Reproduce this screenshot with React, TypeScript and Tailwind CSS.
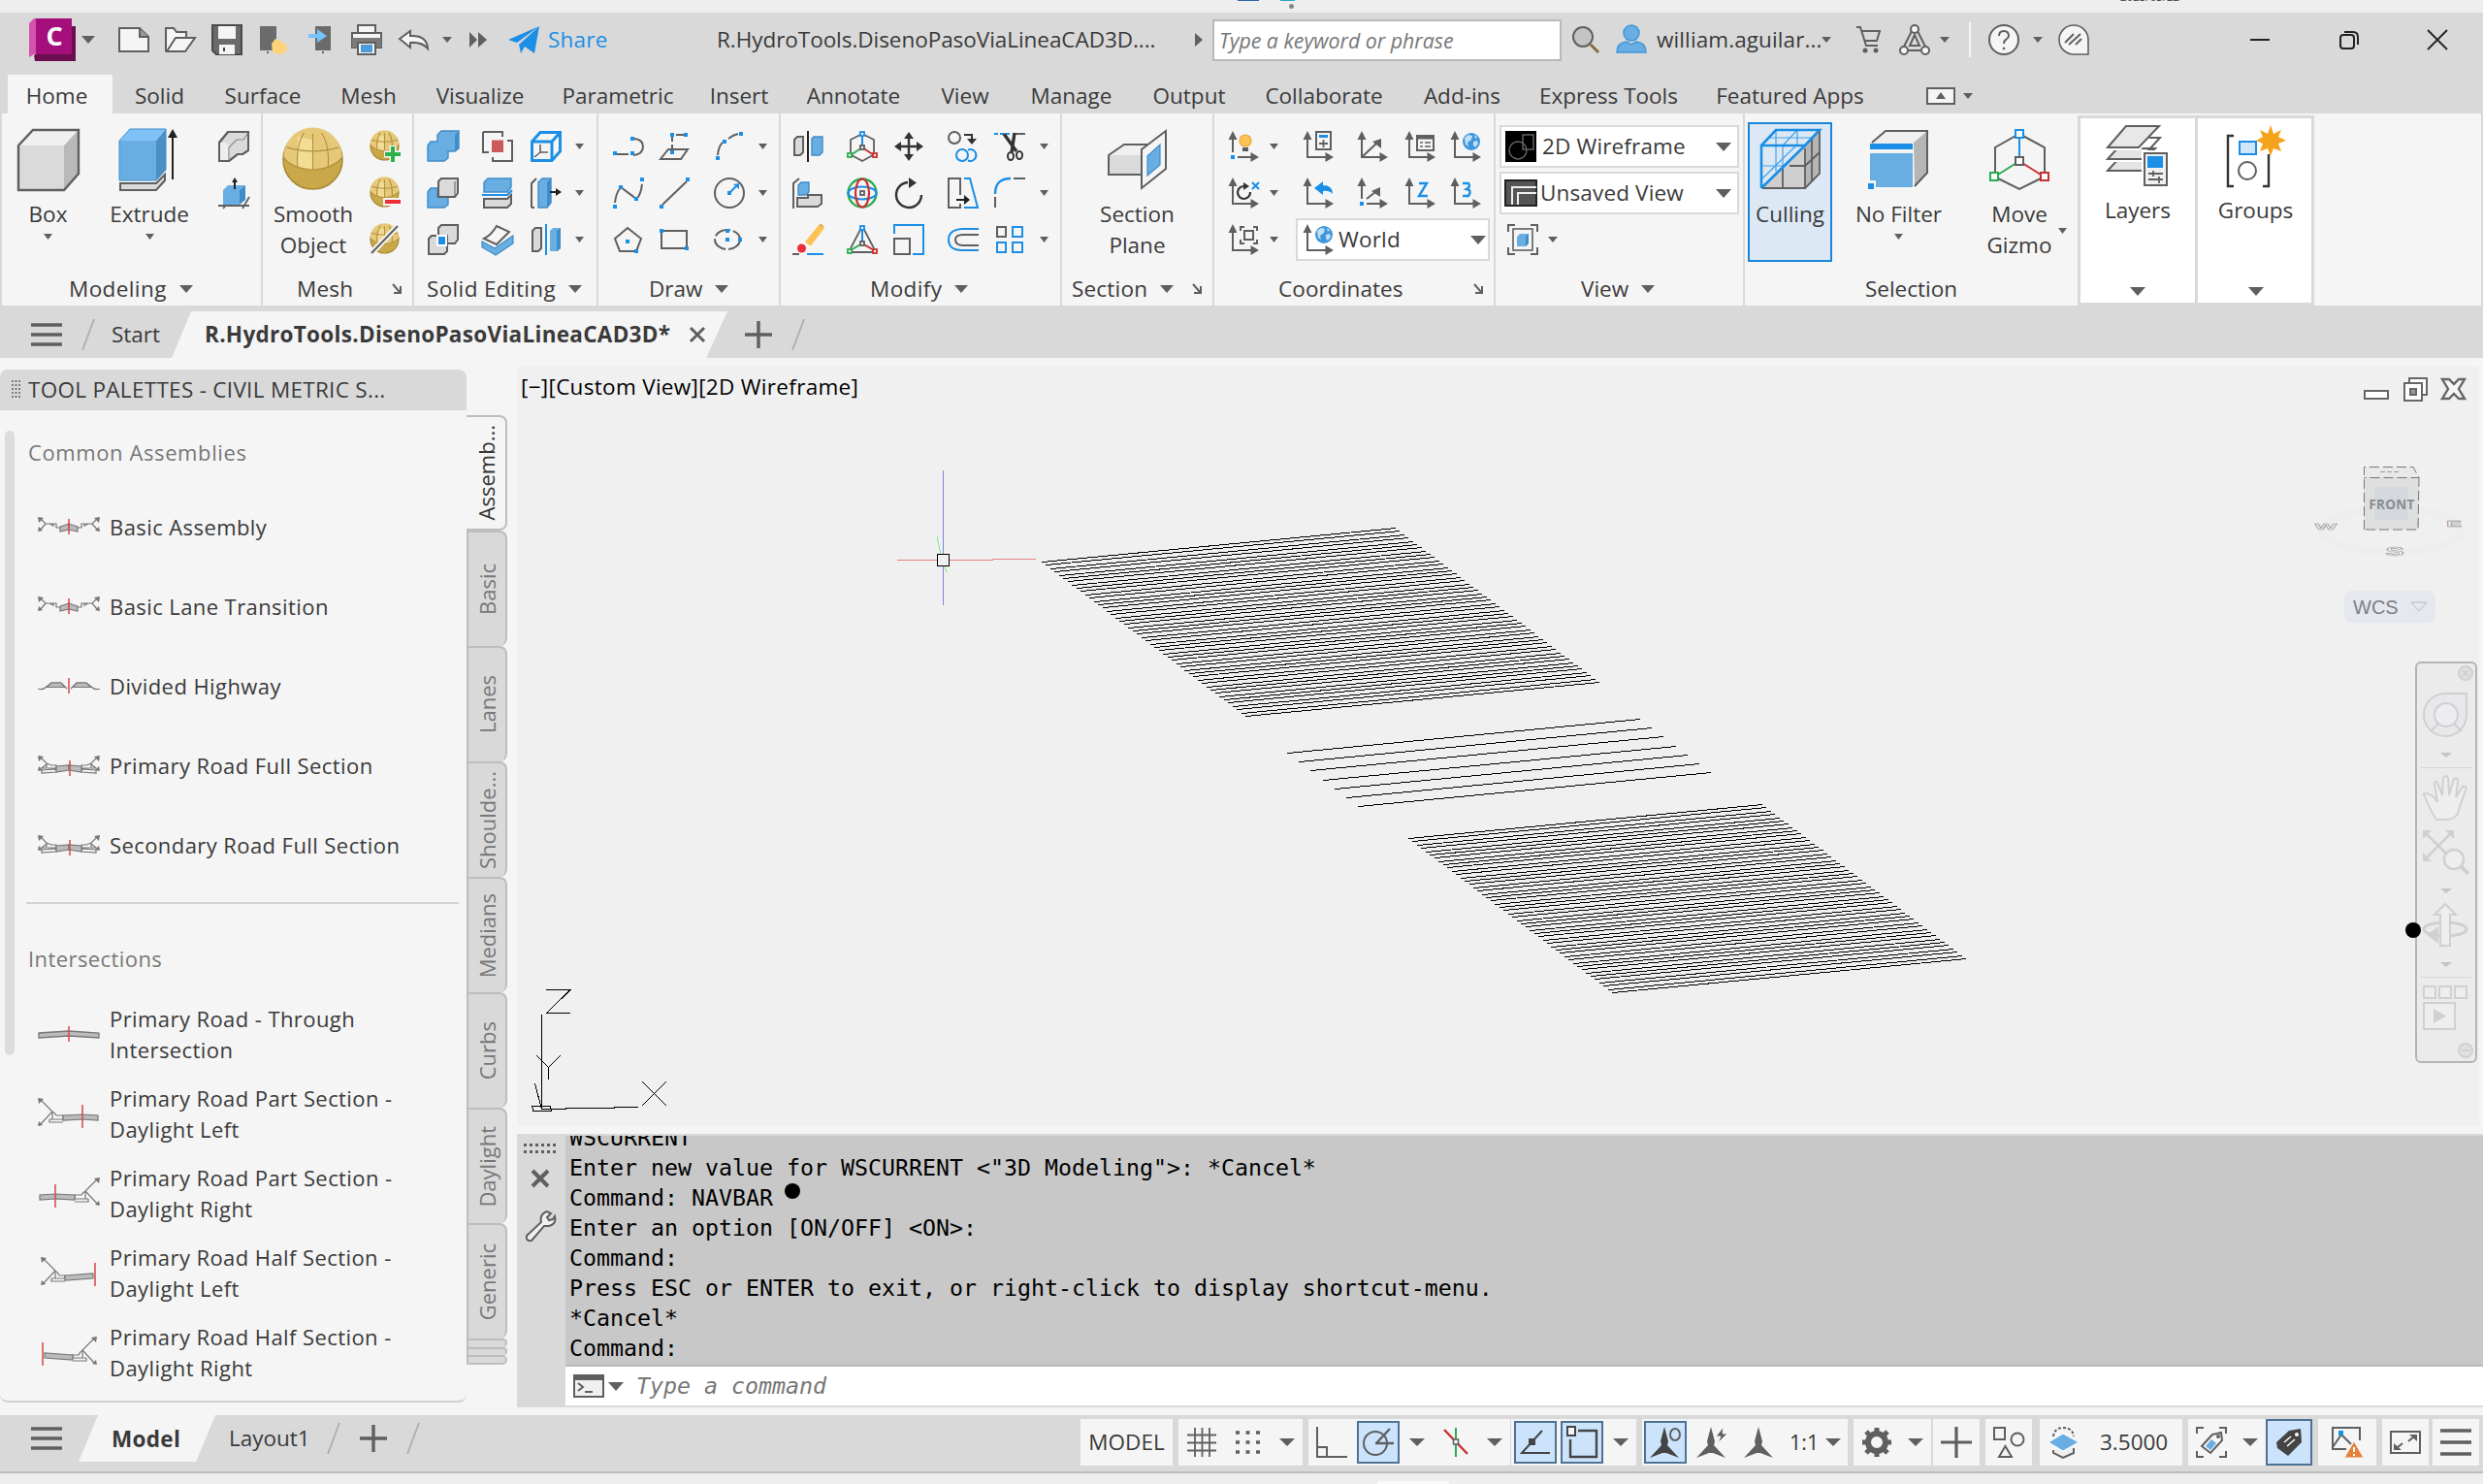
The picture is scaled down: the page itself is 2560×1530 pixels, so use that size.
import React from "react";

const K = "#5f5f5f";
const B = "#1b8ee6";
const F = "#68aee2";

type IP = { w?: number; h?: number; c?: string; children?: React.ReactNode };
const I = ({ w = 32, h = 32, c = "", children }: IP) => (
  <svg width={w} height={h} viewBox={`0 0 ${w} ${h}`} fill="none" stroke={K} strokeWidth={2} className={`block shrink-0 overflow-visible ${c}`}>
    {children}
  </svg>
);

const Down = ({ w = 14, h = 8, c = "" }: IP) => (
  <svg width={w} height={h} viewBox="0 0 14 8" preserveAspectRatio="none" fill={K} className={`block shrink-0 ${c}`}>
    <path d="M0 0H14L7 8Z" />
  </svg>
);

const Launcher = ({ c = "" }: { c?: string }) => (
  <I w={10} h={11} c={c}>
    <path d="M1 1L8 9M9 3V10H2" strokeWidth={2} />
  </I>
);

const Sq = ({ x, y }: { x: number; y: number }) => <rect x={x - 2} y={y - 2} width={4} height={4} fill={B} stroke="none" />;

/* ---------- modeling ---------- */
const BoxBig = () => (
  <I w={64} h={64}>
    <path d="M1 17L16 1H63L48 17Z" fill="#f0f0f0" stroke="none" />
    <path d="M48 17L63 1V46L48 62Z" fill="#b9b9b9" stroke="none" />
    <path d="M1 17H48V63H1Z" fill="#dadada" stroke="none" />
    <path d="M1 17L16 1H63V46L48 63H1Z" strokeWidth={2.4} />
  </I>
);
const ExtrudeBig = () => (
  <I w={62} h={64}>
    <path d="M0 12L11 0H48L38 12Z" fill="#7fc2f7" stroke="none" />
    <path d="M0 12H38V53H0Z" fill={F} stroke="none" />
    <path d="M38 12L48 0V42L38 53Z" fill="#4a8fc6" stroke="none" />
    <path d="M0 12L11 0H48V42L38 53H0Z" stroke="#3f8cc9" strokeWidth={1} />
    <path d="M1 56H38L47 47V53L38 63H1Z" fill="#dadada" />
    <path d="M55 52V6" stroke="#222" />
    <path d="M55 0L60 9H50Z" fill="#222" stroke="none" />
  </I>
);
const Polysolid = () => (
  <I>
    <path d="M1 12L10 1H31V20L25 24H20L11 31H1Z" fill="#dadada" />
    <path d="M1 12H8L12 16V30L11 31H1Z" fill="#eee" stroke="none" />
    <path d="M11 31V17L19 9H26L31 2" strokeWidth={1.2} stroke="#8a8a8a" />
    <path d="M1 12L10 1H31V20L25 24H20L11 31H1Z" />
  </I>
);
const PressPull = () => (
  <I>
    <path d="M0 29H32M5 32L10 26M25 32L32 20" strokeWidth={1.8} />
    <path d="M5 13L10 8H28L22 13V28H5Z" fill={F} stroke="none" />
    <path d="M22 13L28 8V23L22 28Z" fill="#3f8cc9" stroke="none" />
    <path d="M17 12V3" stroke="#222" />
    <path d="M17 0L20 5H14Z" fill="#222" stroke="none" />
  </I>
);

/* ---------- mesh ---------- */
const Ball = ({ r }: { r: number }) => (
  <g>
    <circle cx={r} cy={r} r={r - 1} fill="#c9a84a" stroke="#a88a32" strokeWidth={r > 20 ? 1.6 : 1.2} />
    <path d={`M${r * 0.05} ${r * 0.9}A${r * 0.95} ${r * 0.95} 0 0 1 ${r * 1.95} ${r * 0.9}Q${r * 1.7} ${r * 1.3} ${r} ${r * 1.35}Q${r * 0.3} ${r * 1.3} ${r * 0.05} ${r * 0.9}Z`} fill="#e6c978" stroke="none" />
    <path d={`M${r * 0.5} ${r * 0.25}L${r} ${r * 0.35}V${r * 1.3}Q${r * 0.7} ${r * 1.3} ${r * 0.5} ${r * 1.2}Z`} fill="#f3dc93" stroke="none" />
    <path
      d={`M${r} ${r * 0.15}V${r * 1.33}M${r * 0.72} ${r * 0.12}Q${r * 0.45} ${r * 0.5} ${r * 0.5} ${r * 1.24}M${r * 1.28} ${r * 0.12}Q${r * 1.55} ${r * 0.5} ${r * 1.5} ${r * 1.24}M${r * 0.15} ${r * 0.6}Q${r} ${r * 0.85} ${r * 1.85} ${r * 0.6}M${r * 0.05} ${r * 0.95}Q${r * 0.35} ${r * 1.3} ${r} ${r * 1.34}Q${r * 1.65} ${r * 1.3} ${r * 1.95} ${r * 0.95}`}
      stroke="#b09040"
      strokeWidth={1.1}
    />
  </g>
);
const BallAdd = () => (
  <I>
    <Ball r={15.5} />
    <path d="M24 15V32M15 24H32" stroke="#f5f5f5" strokeWidth={7} />
    <path d="M24 16V32M16 24H32" stroke="#2eb04b" strokeWidth={4} />
  </I>
);
const BallSub = () => (
  <I>
    <Ball r={15.5} />
    <path d="M14 25H32" stroke="#f5f5f5" strokeWidth={8} />
    <path d="M16 25H32" stroke="#ee2f35" strokeWidth={4} />
  </I>
);
const BallCrease = () => (
  <I>
    <Ball r={15.5} />
    <path d="M2 30L29 2" stroke="#f5f5f5" strokeWidth={6} />
    <path d="M2 30L29 2" stroke={K} strokeWidth={2} />
  </I>
);

/* ---------- solid editing ---------- */
const Union = () => (
  <I>
    <path d="M0 15L3 11H10V4L14 0H32V18L28 21H21V28L17 31H0Z" fill={F} stroke="#3f8cc9" strokeWidth={1.4} />
    <path d="M28 4L32 0V18L28 21Z" fill="#3f8cc9" stroke="none" />
  </I>
);
const Subtract = () => (
  <I>
    <path d="M0 15L3 11H10V20H21V28L17 31H0Z" fill={F} stroke="#3f8cc9" strokeWidth={1.4} />
    <path d="M11 4L14 1H31V16L28 20H11Z" fill="#dadada" />
    <path d="M28 4V20" strokeWidth={1} />
  </I>
);
const Intersect = () => (
  <I>
    <path d="M11 4L14 1H31V16L28 20H11Z" fill="#dadada" />
    <path d="M1 15L4 12H20V28L17 31H1Z" fill="#dadada" />
    <rect x={9} y={11} width={11} height={12} fill="#fff" stroke="none" />
    <rect x={11} y={13} width={7} height={8} fill={B} stroke="none" />
  </I>
);
const Interfere = () => (
  <I>
    <path d="M1 1H21V6M1 1V22H7" />
    <path d="M31 10H26M11 27V31H31V10H26" />
    <rect x={10} y={9.5} width={12} height={12.5} fill="#cc5a5a" stroke="none" />
  </I>
);
const Slice = () => (
  <I>
    <path d="M2 5L6 1H30V10L26 15H2Z" fill={F} stroke="#3f8cc9" strokeWidth={1.4} />
    <path d="M0 18H26L31 13" stroke={B} strokeWidth={2.2} />
    <path d="M2 22H26L30 18V27L26 31H2Z" fill="#dadada" />
  </I>
);
const Thicken = () => (
  <I>
    <path d="M0 18L13 25L32 12V20L14 32L0 24Z" fill={F} stroke="#3f8cc9" strokeWidth={1.2} />
    <path d="M2 15Q9 12 15 2L28 8Q22 14 15 21Z" fill="#f5f5f5" />
  </I>
);
const ExtractEdges = () => (
  <I>
    <path d="M1.5 11L10 1.5H30.5V21L22 30.5H1.5Z" stroke={B} strokeWidth={3} />
    <path d="M1.5 11H22L30.5 1.5M22 11V30" stroke={B} strokeWidth={3} />
    <path d="M10 14V22L4 27M10 22H18" strokeWidth={1.6} />
  </I>
);
const ExtrudeFace = () => (
  <I>
    <path d="M1 31V6L6 1M1 31H4" />
    <path d="M8 5L12 1H21V26L17 31H8Z" fill={F} stroke="#3f8cc9" strokeWidth={1.4} />
    <path d="M17 5L21 1V26L17 31Z" fill="#3f8cc9" stroke="none" />
    <path d="M20 15H27" stroke="#222" />
    <path d="M32 15L26 11V19Z" fill="#222" stroke="none" />
  </I>
);
const Separate = () => (
  <I>
    <path d="M2 7L5 4H11V25L8 28H2Z" fill="#dadada" />
    <path d="M16 0V32" stroke={B} />
    <path d="M20 7L23 4H31V25L28 28H20Z" fill={F} stroke="none" />
    <path d="M27 7L31 4V25L27 28Z" fill="#3f8cc9" stroke="none" />
  </I>
);

/* ---------- draw ---------- */
const Polyline = () => (
  <I>
    <path d="M2 24H20" strokeDasharray="14 4" />
    <path d="M22 8Q31 9 31 16Q31 24 21 25" />
    <Sq x={2} y={23} /><Sq x={20} y={23} /><Sq x={20} y={8} />
  </I>
);
const Poly3d = () => (
  <I>
    <path d="M1 29L9 19H29L22 29Z" /><path d="M13 22V4H27" strokeDasharray="8 3" />
    <Sq x={13} y={22} /><Sq x={13} y={4} /><Sq x={27} y={4} />
  </I>
);
const Arc = () => (
  <I>
    <path d="M4 25Q5 15 9 12M15 8Q20 4 25 3" />
    <Sq x={4} y={28} /><Sq x={11} y={11} /><Sq x={28} y={3} />
  </I>
);
const Spline = () => (
  <I>
    <path d="M2 26Q3 16 8 10L24 22Q29 18 30 6" strokeDasharray="16 3" />
    <Sq x={2} y={30} /><Sq x={8} y={10} /><Sq x={24} y={22} /><Sq x={30} y={2} />
  </I>
);
const Line = () => (
  <I>
    <path d="M3 28L28 4" /><Sq x={2} y={30} /><Sq x={29} y={2} />
  </I>
);
const Circle = () => (
  <I c="translate-x-[-1px]">
    <circle cx={17} cy={16} r={15} /><path d="M17 16L24 9" stroke={B} />
    <path d="M27 6V12L21 7Z" fill={B} stroke="none" /><Sq x={17} y={16} />
  </I>
);
const Polygon = () => (
  <I>
    <path d="M15 4L29 15L24 28H7L2 15Z" /><Sq x={15} y={18} /><Sq x={24} y={28} />
  </I>
);
const Rect = () => (
  <I>
    <rect x={2} y={7} width={26} height={18} /><Sq x={2} y={7} /><Sq x={28} y={25} />
  </I>
);
const Ellipse = () => (
  <I>
    <ellipse cx={14} cy={16} rx={13} ry={10} strokeDasharray="17 3" /><Sq x={14} y={7} /><Sq x={14} y={16} /><Sq x={27} y={16} />
  </I>
);

/* ---------- modify ---------- */
const Mirror3d = () => (
  <I>
    <path d="M2 9L5 6H11V22L8 25H2Z" fill="#dadada" /><path d="M16 0V32" stroke="#222" />
    <path d="M20 8L22 6H31V22L28 25H20Z" fill={F} stroke="#3f8cc9" strokeWidth={1.4} />
  </I>
);
const Align3d = () => (
  <I>
    <path d="M1 32V6L7 1" />
    <path d="M6 8L9 5H17V15L14 18H6Z" fill={F} stroke="#3f8cc9" strokeWidth={1.4} />
    <path d="M5 21H16V18H30V27L26 30H5Z" fill="#dadada" />
  </I>
);
const Erase = () => (
  <I>
    <path d="M11 21L27 1L33 4L17 25Z" fill="#fbc354" stroke="none" /><path d="M27 1L33 4L30 0Z" fill="#e09a2c" stroke="none" />
    <path d="M9 18L18 24" stroke="#fff" strokeWidth={3} /><ellipse cx={9.5} cy={25} rx={4.5} ry={4.5} fill="#ee2f35" stroke="none" />
    <path d="M0 31H7" /><path d="M15 31H32" stroke={B} />
  </I>
);
const Node = ({ x, y, s }: { x: number; y: number; s: string }) => <rect x={x - 2} y={y - 2} width={4} height={4} stroke={s} fill="#f5f5f5" strokeWidth={1.8} />;
const Gizmo = () => (
  <I>
    <path d="M4 22V9L16 3L28 9V22M5 25L16 31L27 25" strokeWidth={1.8} />
    <path d="M16 3V16" stroke={B} /><path d="M16 17L4 25" stroke="#2bab52" /><path d="M16 17L28 25" stroke="#cb2e2e" />
    <Node x={16} y={3} s={B} /><Node x={16} y={17} s={K} /><Node x={3} y={25} s="#2bab52" /><Node x={29} y={25} s="#cb2e2e" />
  </I>
);
const Rotate3d = () => (
  <I>
    <circle cx={16} cy={16} r={14.5} stroke="#2bab52" strokeWidth={2.4} /><ellipse cx={16} cy={16} rx={14.5} ry={6.5} stroke={B} strokeWidth={2.2} />
    <ellipse cx={16} cy={16} rx={7} ry={14.5} stroke="#cb2e2e" strokeWidth={2.2} /><Node x={16} y={16} s={K} />
  </I>
);
const Scale3d = () => (
  <I>
    <path d="M15 4L4 25M17 4L28 25M5 29H27" strokeWidth={1.8} />
    <path d="M16 3V18" stroke={B} /><path d="M16 20L4 27" stroke="#2bab52" /><path d="M16 20L28 27" stroke="#cb2e2e" />
    <Node x={16} y={4} s={B} /><Node x={16} y={20} s={K} /><Node x={3} y={28} s="#2bab52" /><Node x={29} y={28} s="#cb2e2e" />
  </I>
);
const Move = () => (
  <I>
    <path d="M16 4V28M4 16H28" stroke="#333" strokeWidth={2.4} />
    <path d="M16 1L21 8H11ZM16 31L21 24H11ZM1 16L8 11V21ZM31 16L24 11V21Z" fill="#333" stroke="none" />
  </I>
);
const Rotate = () => (
  <I>
    <path d="M15 5A13 13 0 1 0 29 18" stroke="#333" strokeWidth={2.4} /><path d="M16 0L24 5.5L16 11Z" fill="#333" stroke="none" />
  </I>
);
const Scale = () => (
  <I>
    <path d="M1 10V1H31V31H20" stroke={B} /><rect x={1} y={15} width={16} height={16} />
  </I>
);
const Copy = () => (
  <I>
    <circle cx={7} cy={7} r={6} /><path d="M17 4H25V9" stroke="#333" /><path d="M20 8H30L25 14Z" fill="#333" stroke="none" />
    <circle cx={15} cy={25} r={6} stroke={B} /><path d="M21 19.5A6 6 0 1 1 21 30.5" stroke={B} />
  </I>
);
const Stretch = () => (
  <I>
    <path d="M13 18V1H1V31H13V27" /><path d="M17 1H23L31 31H17" stroke={B} />
    <path d="M9 23H18" stroke="#222" /><path d="M23 23L17 18V28Z" fill="#222" stroke="none" />
  </I>
);
const Offset = () => (
  <I>
    <path d="M32 5H15Q1 6 1 16Q1 27 15 27H32" stroke={B} /><path d="M32 11H16Q8 11 8 16Q8 22 16 22H32" />
  </I>
);
const Trim = () => (
  <I>
    <path d="M0 3H16" stroke={B} strokeDasharray="4 2" /><path d="M20 3H32" />
    <path d="M10 3L23 21M21 2L18 22" stroke="#333" strokeWidth={3.4} /><ellipse cx={17} cy={26} rx={3} ry={4} stroke="#333" /><ellipse cx={26} cy={25} rx={3} ry={4} stroke="#333" />
  </I>
);
const Fillet = () => (
  <I>
    <path d="M1 17Q1 1 17 1" stroke={B} strokeWidth={2.4} /><path d="M1 20V31M20 1H32" />
  </I>
);
const ArrayIcon = () => (
  <I>
    <rect x={3} y={3} width={9} height={10} /><g stroke={B}><rect x={19} y={3} width={10} height={10} /><rect x={3} y={19} width={9} height={10} /><rect x={19} y={19} width={10} height={10} /></g>
  </I>
);

/* ---------- section ---------- */
const SectionPlane = () => (
  <I w={62} h={64}>
    <path d="M1 27L17 16H42L34 27Z" fill="#f0f0f0" stroke="none" /><path d="M1 27H34V47H1Z" fill="#dadada" stroke="none" />
    <path d="M34 47H1V27L17 16H42" /><path d="M35 21L60 2V41L35 61Z" fill="#f5f5f5" />
    <path d="M41 28L54 16V37L41 48Z" fill={F} stroke="#3f8cc9" strokeWidth={1.2} />
  </I>
);

/* ---------- coordinates ---------- */
const Axes = ({ children, corner }: { children?: React.ReactNode; corner?: boolean }) => (
  <I>
    <path d={corner ? "M4 6V22M9 27H24" : "M4 6V27H24"} /><path d="M4 0L8.5 9H-.5ZM31 27L22.5 22V32Z" fill={K} stroke="none" />
    {corner && <Sq x={4} y={27} />}
    {children}
  </I>
);
const Globe = ({ x, y }: { x: number; y: number }) => (
  <g stroke="none">
    <circle cx={x} cy={y} r={9} fill="#3f96d8" />
    <path d={`M${x - 7} ${y - 4}l4-3l4 1l-1 4l-4 3l1 4l-3-2zM${x + 2} ${y}l4-1l1 3l-3 4l-2-2zM${x + 3} ${y - 7}l3 2l-2 2z`} fill="#bfe0f7" />
  </g>
);
const UcsIcons = [
  <Axes key="a"><rect x={13} y={1} width={15} height={18} fill="#f5f5f5" /><rect x={16} y={4} width={9} height={3} fill={B} stroke="none" /><path d="M16 13H25M20.5 9V17" strokeWidth={1.8} /></Axes>,
  <Axes key="b"><path d="M4 27L19 13" /><path d="M24 8V18L15 11Z" fill={K} stroke="none" /></Axes>,
  <Axes key="c"><rect x={12} y={5} width={17} height={15} fill="#f5f5f5" /><path d="M12 7H29" strokeWidth={3} /><path d="M15 12H18M20 12H26M15 16H18M20 16H26" strokeWidth={1.6} /></Axes>,
  <Axes key="d"><Globe x={21} y={11} /></Axes>,
  <Axes key="e"><path d="M11 11L20 4V8Q30 8 30 17Q26 13 20 14V18Z" fill={B} stroke="none" /></Axes>,
  <Axes key="f" corner><path d="M9 22L18 15" /><path d="M23 10V20L14 14Z" fill={K} stroke="none" /></Axes>,
  <Axes key="g"><path d="M14 6H22L14 19H23" stroke={B} strokeWidth={2.4} /></Axes>,
  <Axes key="h"><path d="M12 6H18Q21 9 16 12Q22 13 18 19H12" stroke={B} strokeWidth={2.4} /></Axes>,
];

/* ---------- selection ---------- */
const CullingIcon = () => (
  <I w={62} h={62}>
    <path d="M1 61L62 1V46L46 61Z" fill="#cfcfcf" stroke="none" /><path d="M46 17L61 1V46L46 61Z" fill="#b5b5b5" stroke="none" />
    <path d="M46 20V61H2M46 61L61 46V2M23 38V61M30 38H46L61 24M53 10V54" strokeWidth={1.8} />
    <path d="M1 61V17L16 1H61L46 17H1M1 61L46 17" stroke={B} strokeWidth={2.6} />
    <path d="M23 17L38 1V16L1 52M8 9H53M16 2V44M1 38H24M23 17V38" stroke={B} strokeWidth={1.2} opacity={0.8} />
  </I>
);
const NoFilterIcon = () => (
  <I w={64} h={64}>
    <path d="M4 15L18 2H61L46 15Z" fill="#f0f0f0" stroke="none" /><path d="M47 14L61 2V45L48 60Z" fill="#b5b5b5" stroke="none" />
    <path d="M4 14L18 2H61V45L48 59" />
    <rect x={2} y={15} width={44} height={6} fill={B} stroke="none" /><rect x={2} y={25} width={44} height={35} fill={F} stroke="none" />
    <rect x={-1} y={53} width={9} height={10} fill="#f5f5f5" stroke="none" /><rect x={0} y={56} width={6} height={6} fill={B} stroke="none" />
  </I>
);
const MoveGizmoIcon = () => (
  <I w={62} h={64}>
    <path d="M6 44V19L31 5L57 19V44M9 51L31 62L53 51" />
    <path d="M31 9V29" stroke={B} /><path d="M28 35L9 47" stroke="#2bab52" /><path d="M34 35L53 47" stroke="#cb2e2e" />
    <rect x={27} y={1} width={8} height={8} stroke={B} fill="#fff" /><rect x={27} y={29} width={8} height={8} fill="#fff" />
    <rect x={1} y={45} width={8} height={8} stroke="#2bab52" fill="#fff" /><rect x={53} y={45} width={8} height={8} stroke="#cb2e2e" fill="#fff" />
  </I>
);
const LayersIcon = () => (
  <I w={64} h={64}>
    <path d="M1 47L11 36H50L38 47Z" fill="#e4e4e4" /><path d="M1 35L11 24H50L38 35Z" fill="#e4e4e4" stroke="#fff" strokeWidth={6} /><path d="M1 35L11 24H50L38 35Z" fill="#e4e4e4" />
    <path d="M1 23L20 1H54L33 23Z" fill="#e8e8e8" stroke="#fff" strokeWidth={6} /><path d="M1 23L20 1H54L33 23Z" fill="#e8e8e8" />
    <path d="M44 13H55L44 25H50" />
    <rect x={36} y={26} width={28} height={38} fill="#fff" stroke="none" /><rect x={39} y={29} width={23} height={33} fill="#f0f0f0" />
    <rect x={42} y={32} width={16} height={12} fill={B} stroke="none" /><path d="M43 50H58M43 56H58M48 47V53M54 53V60" strokeWidth={1.8} />
  </I>
);
const GroupsIcon = () => (
  <I w={62} h={64}>
    <path d="M8 11H2V63H8M38 63H44V30" stroke="#333" strokeWidth={2.4} />
    <rect x={14} y={17} width={17} height={13} stroke={B} fill="#cfe6f8" /><circle cx={22} cy={47} r={9} />
    <path d="M46 0L49 9L57 5L54 12L62 16L54 19L57 27L49 24L46 32L43 24L35 27L38 19L31 16L38 12L35 5L43 9Z" fill="#f5a31a" stroke="none" />
  </I>
);

/* ---------- layout pieces ---------- */
const Col = ({ c, children }: { c: string; children: React.ReactNode }) => <div className={`flex flex-col gap-4 pt-[2px] ${c}`}>{children}</div>;
const Arrows = ({ c }: { c: string }) => (
  <div className={`flex flex-col gap-[42px] pt-[15px] ${c}`}>
    <Down w={9} h={6} /><Down w={9} h={6} /><Down w={9} h={6} />
  </div>
);
const Panel = ({ c, title, tc, arrow, launcher, children }: { c: string; title: string; tc: string; arrow?: boolean; launcher?: boolean; children: React.ReactNode }) => (
  <section className={`flex shrink-0 flex-col border-r-2 border-[#d9d9d9] ${c}`}>
    <div className="flex h-[163px] pt-4">{children}</div>
    <div className={`flex h-[35px] items-center whitespace-nowrap ${tc}`}>
      <span>{title}</span>
      {arrow && <Down c="ml-[13px]" />}
      {launcher && <Launcher c="mr-[11px] ml-auto" />}
    </div>
  </section>
);
const Big = ({ c, icon, lines, arrow }: { c: string; icon: React.ReactNode; lines: string[]; arrow?: boolean }) => (
  <div className={`flex flex-col items-center ${c}`}>
    {icon}
    <div className="mt-2 text-center leading-8 whitespace-nowrap">{lines.map((l) => <div key={l}>{l}</div>)}</div>
    {arrow && <Down w={9} h={6} c="mt-1" />}
  </div>
);

const TitleBar = () => (
  <header className="flex h-16 items-center bg-[#d9d9d9] pb-[8px] text-[22.5px] whitespace-nowrap">
    <svg width={48} height={44} viewBox="0 0 48 44" className="ml-[30px] shrink-0">
      <path d="M6 8H48V44H6Z" fill="#6b0d4e" /><path d="M0 5L5 0H44V37H5L0 40Z" fill="#d653ab" /><path d="M7 0H44V37H7Z" fill="#a50f7b" /><path d="M5 38H48V44H6Z" fill="#6b0d4e" />
      <text x={26} y={28} textAnchor="middle" fontSize={27} fontWeight={700} fill="#fff" fontFamily="Open Sans">C</text>
    </svg>
    <Down w={14} h={8} c="ml-1.5" />
    <I c="ml-6" w={32} h={26}><path d="M1 1H22L31 10V25H1Z" fill="#f5f5f5" /><path d="M22 1V10H31" fill="#999" /></I>
    <I c="ml-4" w={32} h={28}><path d="M1 26V2H9L12 6H22V12" fill="#f5f5f5" /><path d="M2 26L11 12H31L21 26Z" fill="#f5f5f5" /></I>
    <I c="ml-4"><path d="M1 1H31V31H5L1 27Z" fill="#6b6b6b" stroke="#4a4a4a" /><rect x={7} y={2} width={18} height={13} fill="#f5f5f5" stroke="none" /><rect x={8} y={21} width={16} height={10} fill="#f5f5f5" stroke="none" /><path d="M13 24V28" stroke="#444" /></I>
    <I c="ml-[18px]" w={28} h={30}><rect x={0} y={1} width={17} height={25} fill="#6b6b6b" stroke="none" /><path d="M8 27V29" /><path d="M12 19L16 14L22 17L27 20Q30 29 20 30L13 28Z" fill="#ffd27a" stroke="none" /></I>
    <I c="ml-[22px]" w={23} h={30}><rect x={7} y={1} width={16} height={25} fill="#6b6b6b" stroke="none" /><path d="M15 27V29" /><path d="M0 9H9V4L19 11L9 18V13H0Z" fill="#77c3fb" stroke="none" /></I>
    <I c="ml-[21px]"><path d="M7 12V1H25V12" fill="#f5f5f5" /><rect x={1} y={9} width={30} height={15} fill="#f5f5f5" /><path d="M1 14H31V24H1Z" fill="#7a7a7a" stroke="none" /><rect x={7} y={19} width={18} height={12} fill="#f5f5f5" /><rect x={10} y={21} width={12} height={8} fill="#4d9bd8" stroke="none" /></I>
    <I c="ml-[17px]" w={31} h={20}><path d="M1 9L12 1V6Q29 5 30 19Q24 12 12 13V18Z" fill="#f5f5f5" /></I>
    <Down w={10} h={6} c="ml-3.5" />
    <I c="ml-[18px]" w={18} h={16}><path d="M0 0L8 8L0 16ZM9 0L18 8L9 16Z" fill={K} stroke="none" /></I>
    <I c="ml-[22px]" w={32} h={28}><path d="M0 14L32 0L9 17ZM32 0L27 28L17 21L13 28L11 19Z" fill={B} stroke="none" /></I>
    <span className="ml-[9px] w-[174px] tracking-[0.2px] text-[#1b8ee6]">Share</span>
    <span className="w-[493px] tracking-[-0.05px]">R.HydroTools.DisenoPasoViaLineaCAD3D....</span>
    <I w={8} h={14}><path d="M0 0L8 7L0 14Z" fill={K} stroke="none" /></I>
    <div className="ml-[10px] h-[43px] w-[360px] border-2 border-[#b9b9b9] bg-white pl-[5px] text-[21.3px] leading-[39px] text-[#777] italic">Type a keyword or phrase</div>
    <I c="ml-[11px]" w={28} h={28}><circle cx={11} cy={11} r={10} fill="#c4c4c4" /><path d="M19 19L27 27" stroke="#8a6a3c" strokeWidth={3} /></I>
    <I c="ml-[17px]"><circle cx={16} cy={9} r={8} fill={F} stroke="#3f96d8" strokeWidth={1.5} /><path d="M1 29Q1 19 11 18L16 21L21 18Q31 19 31 29Z" fill={F} stroke="#3f96d8" strokeWidth={1.5} /></I>
    <span className="ml-[10px] w-[170px] tracking-[0.1px]">william.aguilar...</span>
    <Down w={10} h={6} />
    <I c="ml-[26px]" w={26} h={28}><path d="M0 1H4L10 20H22M6 5H24L21 15H9" fill="none" /><circle cx={9} cy={25} r={1.5} fill={K} /><circle cx={20} cy={25} r={1.5} fill={K} /></I>
    <I c="ml-[18px]"><circle cx={16} cy={5} r={4} fill="#f5f5f5" /><path d="M13 7L5 23M19 7L27 23M10 27H22M16 11L11 22H21Z" /><circle cx={5} cy={27} r={4} fill="#f5f5f5" /><circle cx={27} cy={27} r={4} fill="#f5f5f5" /></I>
    <Down w={10} h={6} c="ml-[10px]" />
    <div className="ml-5 h-9 w-[2px] bg-[#f5f5f5]" />
    <I c="ml-[18px]"><circle cx={16} cy={16} r={15} fill="#f5f5f5" /><path d="M11 12Q11 7 16 7Q21 7 21 12Q21 14 18 16Q16 17 16 20" /><circle cx={16} cy={25} r={1} fill={K} strokeWidth={1} /></I>
    <Down w={10} h={6} c="ml-[14px]" />
    <I c="ml-4"><path d="M31 16V31H16A15 15 0 1 1 31 16Z" fill="#f5f5f5" strokeWidth={1.6} /><path d="M7 19L16 10M11 21L23 10M18 21L24 15" strokeWidth={2} /></I>
    <I c="ml-[166px]" w={20} h={2}><path d="M0 1H20" stroke="#222" /></I>
    <I c="ml-[72px]" w={20} h={20}><rect x={1} y={5} width={14} height={14} rx={3} stroke="#222" /><path d="M5 2H14Q19 2 19 7V15" stroke="#222" /></I>
    <I c="ml-[71px]" w={20} h={20}><path d="M0 0L20 20M20 0L0 20" stroke="#222" strokeWidth={1.8} /></I>
  </header>
);

const tabs: [string, string][] = [
  ["Solid", "w-[93px]"], ["Surface", "w-[120px]"], ["Mesh", "w-[98px]"], ["Visualize", "w-[132px]"], ["Parametric", "w-[152px]"],
  ["Insert", "w-[98px]"], ["Annotate", "w-[138px]"], ["View", "w-[92px]"], ["Manage", "w-[127px]"], ["Output", "w-[116px]"],
  ["Collaborate", "w-[162px]"], ["Add-ins", "w-[123px]"], ["Express Tools", "w-[179px]"], ["Featured Apps", "w-[195px]"],
];

const RibbonTabs = () => (
  <nav className="flex h-10 bg-[#d9d9d9] pl-2 text-center text-[22.5px] leading-[43px] whitespace-nowrap">
    <div className="w-[108px] bg-[#f5f5f5] pr-[7px]">Home</div>
    <div className="w-[2px]" />
    {tabs.map(([t, w]) => <div key={t} className={w}>{t}</div>)}
    <I c="mt-[13px] ml-[43px]" w={30} h={18}><rect x={1} y={1} width={28} height={16} fill="#f5f5f5" /><path d="M10 12L15 5L20 12Z" fill={K} stroke="none" /></I>
    <Down w={10} h={6} c="mt-[19px] ml-2" />
  </nav>
);

const Ribbon = () => (
  <div className="mx-[2px] flex h-[198px] bg-[#f5f5f5] text-[22.5px]">
    <Panel c="w-[269px]" title="Modeling" tc="pl-[69px] tracking-[0.4px]" arrow>
      <Big c="w-[95px]" icon={<BoxBig />} lines={["Box"]} arrow />
      <Big c="w-[114px]" icon={<ExtrudeBig />} lines={["Extrude"]} arrow />
      <Col c="ml-[14px]"><Polysolid /><PressPull /></Col>
    </Panel>
    <Panel c="w-[156px]" title="Mesh" tc="pl-[35px] tracking-[0.2px]" launcher>
      <Big c="w-[104px]" icon={<I w={64} h={64}><Ball r={31.5} /></I>} lines={["Smooth", "Object"]} />
      <Col c="ml-1.5"><BallAdd /><BallSub /><BallCrease /></Col>
    </Panel>
    <Panel c="w-[190px]" title="Solid Editing" tc="pl-[13px] tracking-[0.35px]" arrow>
      <Col c="ml-[14px]"><Union /><Subtract /><Intersect /></Col>
      <Col c="ml-6"><Interfere /><Slice /><Thicken /></Col>
      <Col c="ml-[18px]"><ExtractEdges /><ExtrudeFace /><Separate /></Col>
      <Arrows c="ml-[14px]" />
    </Panel>
    <Panel c="w-[188px]" title="Draw" tc="pl-[52px]" arrow>
      <Col c="ml-[15px]"><Polyline /><Spline /><Polygon /></Col>
      <Col c="ml-4"><Poly3d /><Line /><Rect /></Col>
      <Col c="ml-6"><Arc /><Circle /><Ellipse /></Col>
      <Arrows c="ml-[14px]" />
    </Panel>
    <Panel c="w-[290px]" title="Modify" tc="pl-[92px] tracking-[0.4px]" arrow>
      <Col c="ml-3"><Mirror3d /><Align3d /><Erase /></Col>
      <Col c="ml-6"><Gizmo /><Rotate3d /><Scale3d /></Col>
      <Col c="ml-4"><Move /><Rotate /><Scale /></Col>
      <Col c="ml-6"><Copy /><Stretch /><Offset /></Col>
      <Col c="ml-4"><Trim /><Fillet /><ArrayIcon /></Col>
      <Arrows c="ml-[15px]" />
    </Panel>
    <Panel c="w-[157px]" title="Section" tc="pl-[10px] tracking-[0.2px]" arrow launcher>
      <Big c="w-[155px]" icon={<SectionPlane />} lines={["Section", "Plane"]} />
    </Panel>
    <Panel c="w-[290px]" title="Coordinates" tc="pl-[66px] tracking-[0.1px]" launcher>
      <Col c="ml-[15px]">
        <Axes corner><circle cx={17} cy={10} r={6} fill="#fbc354" stroke="#e8a83a" strokeWidth={1.2} /><path d="M14 19H20" strokeWidth={4} /></Axes>
        <Axes><path d="M16 9A6.5 6.5 0 1 0 22 15" stroke="#333" strokeWidth={2.2} /><path d="M15 5L21 9L15 13Z" fill="#333" stroke="none" /><path d="M24 5L31 12M31 5L24 12" stroke={B} /></Axes>
        <Axes><rect x={16} y={7} width={9} height={9} /><path d="M12 7V3H16M25 3H29V7M12 16V20H16M25 20H29V16" /></Axes>
      </Col>
      <Arrows c="ml-[10px]" />
      <div className="ml-[18px] flex flex-col">
        <div className="grid grid-cols-[56px_49px_47px_32px] gap-y-4 pt-[2px] pl-2">{UcsIcons}</div>
        <div className="mt-[10px] flex h-[44px] w-[200px] items-center border-2 border-[#d9d9d9] bg-white pl-[6px]">
          <Axes><Globe x={21} y={11} /></Axes>
          <span className="ml-1 tracking-[0.2px]">World</span>
          <Down c="mr-0.5 ml-auto" w={16} h={9} />
        </div>
      </div>
    </Panel>
    <Panel c="w-[257px]" title="View" tc="pl-[88px]" arrow>
      <div className="ml-1 flex flex-col">
        <div className="-mt-1 flex h-[44px] w-[247px] items-center border-2 border-[#d9d9d9] bg-white pl-1">
          <I><rect width={32} height={32} fill="#000" stroke="none" /><circle cx={13} cy={20} r={9} stroke="#666" strokeWidth={1.4} /><rect x={18} y={4} width={11} height={15} stroke="#666" strokeWidth={1.4} /></I>
          <span className="ml-1.5 tracking-[0.15px]">2D Wireframe</span><Down c="mr-1.5 ml-auto" w={16} h={9} />
        </div>
        <div className="mt-[4px] flex h-[44px] w-[247px] items-center border-2 border-[#d9d9d9] bg-white pl-1">
          <I h={26}><rect width={32} height={26} fill="#555" stroke="#222" /><path d="M7 25V7H32M13 25V13H32" stroke="#eee" /></I>
          <span className="ml-1 tracking-[0.15px]">Unsaved View</span><Down c="mr-1.5 ml-auto" w={16} h={9} />
        </div>
        <div className="mt-[10px] ml-2 flex items-center gap-[10px]">
          <I><path d="M1 8V1H8M24 1H31V8M31 24V31H24M8 31H1V24" /><rect x={6} y={5} width={20} height={22} strokeWidth={1.6} /><path d="M10 13L13 10H22V20L19 23H10Z" fill={F} stroke="none" /><path d="M19 13L22 10V20L19 23Z" fill="#3f8cc9" stroke="none" /></I>
          <Down w={10} h={6} />
        </div>
      </div>
    </Panel>
    <section className="flex w-[343px] shrink-0 flex-col">
      <div className="flex h-[163px] pt-[9px]">
        <div className="ml-[3px] flex h-[144px] w-[87px] flex-col border-2 border-[#1b85d8] bg-[#dce9f4] pt-[5px]"><Big c="" icon={<div className="h-16"><CullingIcon /></div>} lines={["Culling"]} /></div>
        <Big c="w-[137px] pt-[7px]" icon={<NoFilterIcon />} lines={["No Filter"]} arrow />
        <Big c="w-[112px] pt-[7px]" icon={<MoveGizmoIcon />} lines={["Move", "Gizmo"]} />
        <Down w={9} h={6} c="mt-[109px] -ml-4" />
      </div>
      <div className="h-[35px] text-center leading-[35px]">Selection</div>
    </section>
    <div className="mt-0.5 flex h-[196px] w-[124px] flex-col items-center border-[3px] border-[#d9d9d9] bg-white pt-[7px]">
      <LayersIcon /><span className="mt-2 leading-8">Layers</span><Down w={16} h={9} c="mt-auto mb-[7px]" />
    </div>
    <div className="mt-0.5 flex h-[196px] w-[120px] flex-col items-center border-[3px] border-l-0 border-[#d9d9d9] bg-white pt-[7px] pl-[2px]">
      <GroupsIcon /><span className="mt-2 leading-8">Groups</span><Down w={16} h={9} c="mt-auto mb-[7px]" />
    </div>
  </div>
);

const Menu = ({ c }: { c: string }) => (
  <I c={c} w={32} h={24}><path d="M0 2H32M0 12H32M0 22H32" strokeWidth={3.6} /></I>
);
const Slash = ({ c }: { c: string }) => (
  <I c={c} w={14} h={32}><path d="M1 32L13 0" stroke="#b0b0b0" /></I>
);
const Plus = ({ c }: { c: string }) => (
  <I c={c} w={28} h={28}><path d="M0 14H28M14 0V28" strokeWidth={3.4} /></I>
);

const FileTabs = () => (
  <div className="flex h-[54px] items-end bg-[#d9d9d9] text-[22.5px]">
    <div className="flex h-12 items-center">
      <Menu c="ml-8" /><Slash c="ml-5" />
      <span className="ml-[17px] w-[62px]">Start</span>
      <div className="flex h-12 w-[573px] items-center bg-[#f5f5f5] pl-[34px] font-bold whitespace-nowrap [clip-path:polygon(20px_0,100%_0,calc(100%-22px)_100%,0_100%)]">
        <span className="w-[500px] tracking-[0.3px]">R.HydroTools.DisenoPasoViaLineaCAD3D*</span>
        <I w={16} h={16}><path d="M1 1L15 15M15 1L1 15" strokeWidth={3} /></I>
      </div>
      <Plus c="ml-[18px]" /><Slash c="ml-5" />
    </div>
  </div>
);

/* ---------- tool palette ---------- */
const G = "#777";
const Red = ({ x, y1 = 1, y2 = 17 }: { x: number; y1?: number; y2?: number }) => <path d={`M${x} ${y1}V${y2}`} stroke="#d95050" strokeWidth={1.6} />;
const Flip = ({ w = 64, children }: { w?: number; children: React.ReactNode }) => <g transform={`translate(${w} 0) scale(-1 1)`}>{children}</g>;
const HalfBasic = () => (
  <g stroke={G} strokeWidth={1.2}>
    <path d="M2 1L8 7H19V11H23M8 7L2 14M12 7L16 9V7" /><path d="M0 0L6 1L1 6ZM0 15L1 10L5 14Z" fill={G} stroke="none" />
    <path d="M23 10L32 7V13L23 15Z" fill="#bbb" />
  </g>
);
const HalfFull = () => (
  <g stroke={G} strokeWidth={1.2}>
    <path d="M2 1L9 8L14 10H19V13H10M9 8V13H4L9 9M4 15L19 14V17L4 18Z" /><path d="M0 0L6 1L1 6ZM0 16L1 11L5 15Z" fill={G} stroke="none" />
    <path d="M19 11L32 10V15L19 17Z" fill="#bbb" />
  </g>
);
const BasicIcon = () => <I w={64} h={20}><HalfBasic /><Flip><HalfBasic /></Flip><Red x={32} y1={2} y2={18} /></I>;
const FullIcon = () => <I w={64} h={20}><HalfFull /><Flip><HalfFull /></Flip><Red x={33} y1={5} y2={21} /></I>;
const DividedIcon = () => (
  <I w={64} h={20}><g stroke={G} strokeWidth={1.2}><path d="M0 13Q5 15 9 11L14 7H24L30 13M64 13Q59 15 55 11L50 7H40L34 13" /><path d="M9 11.500L14 7H24L28 11.500ZM36 11.500L40 7H50L55 11.500Z" fill="#bbb" /></g><Red x={32} y1={2} y2={18} /></I>
);
const ThroughIcon = () => <I w={64} h={24}><path d="M1 11L32 9L63 11V16L32 14L1 16Z" fill="#bbb" stroke={G} strokeWidth={1.3} /><Red x={32} y1={4} y2={20} /></I>;
const PartLeft = () => (
  <g><g stroke={G} strokeWidth={1.2}><path d="M2 1L15 14L2 28M12 22H26V18H19Q16 13 15 16V22M12 22V25H26" /><path d="M0 0L6 1L1 6ZM0 29L1 24L5 28Z" fill={G} stroke="none" /><path d="M26 18L46 17L62 18V23L46 22L26 23Z" fill="#bbb" /></g><Red x={46} y1={7} y2={31} /></g>
);
const HalfLeft = () => (
  <g><g stroke={G} strokeWidth={1.2}><path d="M5 1L18 14L5 28M14 22H28V19H22Q19 13 18 16V22M14 22V25H28" /><path d="M3 0L9 1L4 6ZM3 29L4 24L8 28Z" fill={G} stroke="none" /><path d="M28 19L57 17V22L28 24Z" fill="#bbb" /></g><Red x={59} y1={6} y2={30} /></g>
);

const Item = ({ icon, lines }: { icon: React.ReactNode; lines: string[] }) => (
  <div className="flex h-[82px] items-center pl-[39px]">
    {icon}
    <div className="ml-[10px] leading-8 whitespace-nowrap">{lines.map((l) => <div key={l}>{l}</div>)}</div>
  </div>
);

const sideTabs: [string, string][] = [
  ["Basic", "h-[119px]"], ["Lanes", "h-[119px]"], ["Shoulde...", "h-[119px]"], ["Medians", "h-[119px]"],
  ["Curbs", "h-[119px]"], ["Daylight", "h-[119px]"], ["Generic", "h-[119px]"],
];

const Palette = () => (
  <aside className="flex h-[1090px] w-[533px] shrink-0 bg-[#f5f5f5] pt-3">
    <div className="w-[481px]">
      <div className="flex h-[42px] items-center rounded-t-lg bg-[#d9d9d9] text-[22.5px] whitespace-nowrap">
        <I c="ml-[12px]" w={8} h={20}><path d="M1 0V20M4.5 0V20M8 0V20" strokeWidth={1.5} strokeDasharray="2 2" /></I>
        <span className="ml-[9px] tracking-[0.3px]">TOOL PALETTES - CIVIL METRIC S...</span>
      </div>
      <div className="flex h-[1023px] rounded-b-lg border-b-2 border-[#d0d0d0] bg-[#f5f5f5]">
        <div className="mt-[21px] ml-[5px] h-[644px] w-[10px] shrink-0 rounded-full bg-[#dcdcdc]" />
        <div className="-ml-[15px] flex-1 text-[22px] tracking-[0.42px]">
          <div className="mt-[25px] h-[36px] pl-[29px] leading-9 tracking-[0.6px] text-[#777]">Common Assemblies</div>
          <div className="mt-[18px]">
            <Item icon={<BasicIcon />} lines={["Basic Assembly"]} />
            <Item icon={<BasicIcon />} lines={["Basic Lane Transition"]} />
            <Item icon={<DividedIcon />} lines={["Divided Highway"]} />
            <Item icon={<FullIcon />} lines={["Primary Road Full Section"]} />
            <Item icon={<FullIcon />} lines={["Secondary Road Full Section"]} />
          </div>
          <div className="mt-[18px] mr-2 ml-[27px] h-[2px] bg-[#d4d4d4]" />
          <div className="mt-[38px] h-9 pl-[29px] leading-9 text-[#777]">Intersections</div>
          <div className="mt-[19px]">
            <Item icon={<ThroughIcon />} lines={["Primary Road - Through", "Intersection"]} />
            <Item icon={<I w={64} h={32}><PartLeft /></I>} lines={["Primary Road Part Section -", "Daylight Left"]} />
            <Item icon={<I w={64} h={32}><Flip><PartLeft /></Flip></I>} lines={["Primary Road Part Section -", "Daylight Right"]} />
            <Item icon={<I w={64} h={32}><HalfLeft /></I>} lines={["Primary Road Half Section -", "Daylight Left"]} />
            <Item icon={<I w={64} h={32}><Flip><HalfLeft /></Flip></I>} lines={["Primary Road Half Section -", "Daylight Right"]} />
          </div>
        </div>
      </div>
    </div>
    <div className="mt-[47px] flex w-[42px] flex-col text-[22px] text-[#777]">
      <div className="flex h-[119px] items-center justify-center rounded-r-lg border-2 border-l-0 border-[#bdbdbd] text-[#333]"><span className="rotate-180 [writing-mode:vertical-rl]">Assemb...</span></div>
      {sideTabs.map(([t, h]) => (
        <div key={t} className={`flex items-center justify-center rounded-r-lg border-2 border-b-0 border-[#bdbdbd] bg-[#d9d9d9] ${h}`}><span className="rotate-180 [writing-mode:vertical-rl]">{t}</span></div>
      ))}
      <div className="h-[9px] rounded-r-md border-2 border-b-0 border-[#bdbdbd] bg-[#d9d9d9]" />
      <div className="h-[8px] rounded-r-md border-2 border-b-0 border-[#bdbdbd] bg-[#d9d9d9]" />
      <div className="h-[10px] rounded-r-md border-2 border-[#bdbdbd] bg-[#d9d9d9]" />
    </div>
  </aside>
);

/* ---------- drawing area ---------- */
const hatch = (n: number, x1: number, y1: number, x2: number, y2: number, dx: number, dy: number) =>
  Array.from({ length: n }, (_, i) => {
    const ox = Math.round((dx * i) / (n - 1));
    const oy = Math.round((dy * i) / (n - 1));
    return `M${x1 + ox} ${y1 + oy}L${x2 + ox} ${y2 + oy}`;
  }).join("");

const N = "#d0d0d2";

const Canvas = () => (
  <div className="relative h-[783px] w-[2023px] overflow-hidden bg-[#f0f0f0]">
    <svg width={2023} height={783} viewBox="533 378 2023 783" fill="none" className="block">
      <g stroke="#000" strokeWidth={1} shapeRendering="crispEdges">
        <path d={hatch(48, 1074.5, 579.5, 1439.5, 544.5, 210, 159)} />
        <path d={hatch(7, 1327.5, 776.5, 1691.5, 741.5, 73, 55)} />
        <path d={hatch(48, 1452.5, 864.5, 1817.5, 829.5, 210, 159)} />
        <path d="M563 1020.5H588L563.5 1044.5H588M558.5 1046V1143M553 1088L565.5 1100.5L578 1088M565.5 1100V1113M662 1115L687 1140M687 1115L662 1140M551.5 1117L558 1142M558 1143.5H583V1142.5H633V1141.5H658M548.5 1142V1140.5H567.5V1143M549.5 1142V1145.5H568.5V1143" />
      </g>
      <g shapeRendering="crispEdges">
        <path d="M972.5 485V624" stroke="#8484e8" /><path d="M925 577.5H1023V576.5H1068" stroke="#e88484" /><path d="M966 553L970 571M974 584L976 590" stroke="#84e884" />
        <rect x={966.5} y={571.5} width={12} height={12} stroke="#000" fill="#f0f0f0" />
      </g>
      <ellipse cx={2466} cy={547} rx={72} ry={22} stroke="#eeeeee" strokeWidth={8} />
      <path d="M2437 492L2437 481H2488L2494 492V546H2437Z" fill="#e9e9e9" /><path d="M2437 492H2494V546H2437Z" fill="#dfdfdf" /><rect x={2448} y={502} width={35} height={34} fill="#d5d8dd" />
      <path d="M2437.5 546V481.5H2488L2494 492.5H2437.5M2494 492L2493 546H2437" stroke="#777" strokeDasharray="10 4" />
      <text x={2466} y={525} fontSize={13.5} fontWeight={700} textAnchor="middle" fill="#888c92" fontFamily="Open Sans" letterSpacing={0.3}>FRONT</text>
      <path d="M2454 486.5H2474" stroke="#999" strokeDasharray="5 2" />
      <g fill="#f0f0f0" stroke="#888" strokeWidth={0.8} fontFamily="Liberation Sans" fontWeight={700} textAnchor="middle">
        <text x={0} y={0} fontSize={22} transform="translate(2398 546) scale(1.1 .45)">W</text>
        <text x={0} y={0} fontSize={22} transform="translate(2530 543) scale(1.1 .4)">E</text>
        <text x={0} y={0} fontSize={22} transform="translate(2469 573) scale(1.3 .55)">S</text>
      </g>
      <g stroke="#666" strokeWidth={2}>
        <rect x={2438} y={403} width={24} height={8} fill="#fff" />
        <path d="M2484 394V390H2502V407H2498" fill="#fff" /><rect x={2479} y={395} width={18} height={18} fill="#fff" /><rect x={2485} y={401} width={6} height={6} fill="#999" />
        <path d="M2518 391H2525L2530 396L2535 391H2541L2535 401L2541 411H2535L2530 406L2525 411H2518L2524 401Z" fill="#f5f5f5" strokeWidth={2.4} />
      </g>
    </svg>
    <span className="absolute top-[5px] left-[4px] text-[22.5px] leading-8 tracking-[0.3px] whitespace-nowrap text-black">[−][Custom View][2D Wireframe]</span>
    <div className="absolute top-[231px] left-[1884px] flex h-[33px] w-[94px] items-center gap-3 rounded-lg bg-[#e6e8f0] pl-[9px] font-['Liberation_Sans'] text-[20px] text-[#7c7e84]">
      WCS
      <svg width={18} height={11} viewBox="0 0 18 11" fill="none" stroke="#b8bac4"><path d="M1 1H17L9 10Z" /></svg>
    </div>
    <div className="absolute top-[304px] left-[1957px] flex h-[414px] w-[64px] flex-col items-center rounded-md border-2 border-[#b4b4b4] bg-[#ebebeb]">
      <svg width={60} height={410} viewBox="0 0 60 410" fill="none" stroke={N} strokeWidth={2}>
        <circle cx={50} cy={10} r={7} fill="#e0e0e0" /><path d="M47 7L53 13M53 7L47 13" />
        <path d="M30 31H51V53A22 22 0 1 1 30 31Z" fill="#e8e8ea" /><circle cx={30} cy={53} r={12} fill="#ededf0" /><path d="M22 62L14 70M38 62L46 70" />
        <path d="M4 107.5H56M4 323.5H56" stroke="#d6d6d6" strokeWidth={1} />
        <path d="M8 137Q5 134 8 134Q16 134 21 143L18 124Q18 120 21 123L26 136L27 118Q30 114 32 118L33 136L38 119Q42 117 42 122L40 138L47 127Q52 125 50 131Q44 146 42 155Q38 161 30 161H20Q14 152 8 137Z" fill="#eeeeef" />
        <path d="M8 174L36 202M36 174L8 202" strokeWidth={2.5} /><path d="M6 172H15L6 181ZM38 172H29L38 181ZM6 204V195L15 204Z" fill={N} stroke="none" /><circle cx={38} cy={202} r={10} fill="#eeeeef" strokeWidth={2.5} /><path d="M45 209L53 217" strokeWidth={4} />
        <ellipse cx={29} cy={274} rx={22} ry={7} strokeWidth={3} /><path d="M24 291V259H18L29 248L40 259H34V291Z" fill="#eeeeef" /><path d="M12 280L21 273V287Z" fill={N} />
        <rect x={7} y={333} width={12} height={12} fill="#eeeeef" /><rect x={23} y={333} width={12} height={12} fill="#eeeeef" /><rect x={39} y={333} width={12} height={12} fill="#eeeeef" />
        <rect x={7} y={350} width={32} height={27} fill="#eeeeef" /><path d="M17 356L30 363.5L17 371Z" fill={N} stroke="none" />
        <path d="M24 92H36L30 97ZM24 232H36L30 237ZM24 308H36L30 313Z" fill="#c4c4c4" stroke="none" />
        <circle cx={50} cy={399} r={7} fill="#e0e0e0" /><path d="M46 399H54" />
      </svg>
    </div>
    <div className="absolute top-[573px] left-[1947px] size-4 rounded-full bg-black" />
  </div>
);

const log = [
  "WSCURRENT", 'Enter new value for WSCURRENT <"3D Modeling">: *Cancel*', "Command: NAVBAR", "Enter an option [ON/OFF] <ON>:",
  "Command:", "Press ESC or ENTER to exit, or right-click to display shortcut-menu.", "*Cancel*", "Command:",
];

const Console = () => (
  <div className="mt-2 flex h-[282px] w-[2027px] border-y-2 border-[#d9d9d9] font-['DejaVu_Sans_Mono',monospace] text-[23.25px]">
    <div className="flex w-[50px] shrink-0 flex-col items-center bg-[#d9d9d9]">
      <I c="mt-2" w={36} h={10}><path d="M0 1.5H36M0 8.5H36" strokeWidth={3} strokeDasharray="3 3" /></I>
      <I c="mt-[17px] -ml-[2px]" w={18} h={18}><path d="M1 1L17 17M17 1L1 17" strokeWidth={4} /></I>
      <I c="mt-[24px] -ml-[2px]"><path d="M2 26L17 12Q15 4 23 1L27 3L23 7L25 10L29 9L31 6Q33 14 25 16L20 16L7 31Q1 32 2 26Z" fill="#f0f0f0" /></I>
    </div>
    <div className="flex-1">
      <div className="relative flex h-[238px] flex-col justify-end overflow-hidden border-b-2 border-[#b9b9b9] bg-[#c8c8c8] pb-[2px] pl-1 leading-[31px] whitespace-pre text-black">
        {log.map((l, i) => <div key={i} className="h-[31px] shrink-0">{l}</div>)}
        <div className="absolute top-[49px] left-[226px] size-4 rounded-full bg-black" />
      </div>
      <div className="flex h-[40px] items-center bg-white pl-2 text-[#777] italic">
        <I h={24}><rect x={1} y={1} width={30} height={22} fill="#f0f0f0" /><path d="M0 3H32" strokeWidth={6} /><path d="M5 9L10 13L5 17M12 18H20" strokeWidth={2} /></I>
        <Down c="ml-1" w={16} h={9} />
        <span className="ml-[13px]">Type a command</span>
      </div>
    </div>
  </div>
);

/* ---------- status bar ---------- */
const Cell = ({ c, children }: { c: string; children: React.ReactNode }) => <div className={`flex h-12 shrink-0 items-center bg-[#f5f5f5] ${c}`}>{children}</div>;
const On = ({ c, children }: { c: string; children: React.ReactNode }) => <div className={`flex shrink-0 items-center justify-center border-2 border-[#4f7294] bg-[#cce4fb] ${c}`}>{children}</div>;
const Compass = ({ d = K }: { d?: string }) => <path d="M15 0L19 15L18 19L30 32L17 27H13L0 32L12 19L11 15Z" fill={d} stroke="none" />;

const StatusBar = () => (
  <footer className="flex h-[60px] items-start border-b-2 border-[#bdbdbd] bg-[#d9d9d9] text-[22.5px]">
    <div className="flex h-12 w-[1114px] items-center">
      <Menu c="ml-8" />
      <div className="ml-[17px] h-12 w-[141px] bg-[#f5f5f5] pl-[34px] leading-[50px] font-bold tracking-[0.3px] [clip-path:polygon(20px_0,100%_0,calc(100%-20px)_100%,0_100%)]">Model</div>
      <span className="ml-[14px] w-[101px]">Layout1</span>
      <Slash c="" /><Plus c="ml-5" /><Slash c="ml-5" />
    </div>
    <div className="flex pt-1">
      <Cell c="w-[95px] justify-center">MODEL</Cell>
      <Cell c="ml-1.5 w-[128px]">
        <I c="ml-[9px]" w={30} h={30}><path d="M0 7.5H30M0 15.5H30M0 23.5H30M8 0V30M15.5 0V30M23 0V30" strokeWidth={1.8} /></I>
        <I c="ml-5" w={25} h={24}><path d="M0 2H25M0 12H25M0 22H25" strokeWidth={3.6} strokeDasharray="4 6.5" /></I>
        <Down c="ml-5" w={16} />
      </Cell>
      <Cell c="ml-1.5 w-[208px]">
        <I c="ml-2"><path d="M1 0V31H32M1 21H11V31" /></I>
        <On c="ml-2.5 h-[44px] w-[44px]"><I><circle cx={13} cy={17} r={12} /><path d="M14 17L28 2M13 17H32" strokeWidth={2.4} /></I></On>
        <Down c="ml-2.5" w={16} />
        <I c="ml-5" w={24} h={32}><path d="M12 1V31" stroke="#2bab52" /><path d="M0 3L24 28" stroke="#cb2e2e" strokeWidth={2.4} /><rect x={9.5} y={13} width={5} height={5} fill="#f5f5f5" strokeWidth={1.5} /></I>
        <Down c="ml-5" w={16} />
      </Cell>
      <Cell c="ml-px w-[129px]">
        <On c="ml-[3px] h-[44px] w-[44px]"><I><path d="M23 4L2 27H31" stroke="#444" /><rect x={9} y={12} width={7} height={7} fill="#444" stroke="none" /></I></On>
        <On c="ml-1 h-[44px] w-[44px]"><I><path d="M12 4H31V31H4V13" stroke="#444" strokeWidth={2.4} /><rect x={1} y={0} width={8} height={9} stroke="#444" fill="#f5f5f5" /></I></On>
        <Down c="ml-2.5" w={16} />
      </Cell>
      <Cell c="ml-1.5 w-[212px]">
        <On c="ml-[2px] h-[44px] w-[44px]"><I><Compass d="#444" /><ellipse cx={26} cy={8} rx={5} ry={6} /></I></On>
        <I c="ml-2.5"><Compass /><path d="M28 0L20 10H25L22 17L32 7H27Z" fill={K} stroke="#f5f5f5" strokeWidth={1} /></I>
        <I c="ml-[17px]" w={30}><Compass /></I>
        <span className="ml-[17px] w-[37px] text-[21.5px]">1:1</span>
        <Down w={16} />
      </Cell>
      <Cell c="ml-1.5 w-[80px]">
        <I c="ml-[9px]" w={30} h={30}><circle cx={15} cy={15} r={9} strokeWidth={6} /><path d="M15 0V6M15 24V30M0 15H6M24 15H30M4 4L9 9M21 21L26 26M26 4L21 9M9 21L4 26" strokeWidth={5} /></I>
        <Down c="ml-[17px]" w={16} />
      </Cell>
      <Cell c="ml-[2px] w-12 justify-center"><I><path d="M0 16H32M16 0V32" strokeWidth={3.2} /></I></Cell>
      <Cell c="ml-1.5 w-12 justify-center"><I><rect x={1} y={1} width={11} height={12} /><circle cx={25} cy={13} r={6.5} /><path d="M12.5 20L19 31H6Z" /></I></Cell>
      <Cell c="ml-2 w-[147px]">
        <I c="ml-[9px]" w={32}><path d="M5 24V27L15 32L26 27V22" fill="#eee" /><path d="M5 10Q6 1 15 1Q25 1 26 10" strokeDasharray="3 2" /><path d="M15 7L31 16L15 25L0 16Z" fill={F} stroke="#fff" strokeWidth={1} /></I>
        <span className="ml-[21px]">3.5000</span>
      </Cell>
      <Cell c="ml-1.5 w-[128px]">
        <I c="ml-2"><path d="M1 7V1H8M24 1H31V7M31 25V31H24M8 31H1V25" /><path d="M17 8L26 6L27 14L15 27L6 20Z" fill="#f5f5f5" /><path d="M16 13L21 17L15 24L10 20Z" fill={F} stroke="none" /><circle cx={23} cy={10} r={1} /></I>
        <Down c="ml-4" w={16} />
        <On c="ml-2 h-12 w-12"><I w={26} h={28}><path d="M0 14L13 2L25 0L26 14L12 28L1 20Z" fill="#444" stroke="none" /><path d="M8 14L15 8M11 18L19 11" stroke="#fff" strokeWidth={1.5} /><circle cx={21} cy={6} r={2} fill="#fff" stroke="none" /></I></On>
      </Cell>
      <Cell c="ml-1.5 w-[60px] justify-center"><I><path d="M15 23H1V1H29V14M1 21L10 8L20 18" /><rect x={7} y={4} width={5} height={5} fill={B} stroke="none" /><path d="M23 15L33 32H13Z" fill="#e5813a" stroke="#f5f5f5" strokeWidth={1} /><path d="M23 21V26M23 28V30" stroke="#fff" /></I></Cell>
      <Cell c="ml-1.5 w-12 justify-center"><I h={24}><rect x={1} y={1} width={30} height={22} /><path d="M19 11L25 6M13 13L7 18" /><path d="M28 4V11L20 4ZM4 20V13L12 20Z" fill={K} stroke="none" /></I></Cell>
      <Cell c="ml-1 w-12 justify-center"><I h={28}><path d="M0 2H32M0 14H32M0 26H32" strokeWidth={3.6} /></I></Cell>
    </div>
  </footer>
);

export default function App() {
  return (
    <div className="flex h-[1530px] w-[2560px] flex-col overflow-hidden bg-[#eeeeee] font-['Open_Sans','Noto_Sans',sans-serif] text-[#3a3a3a] [&>*]:shrink-0">
      <div className="flex h-[13px] overflow-hidden">
        <div className="ml-[1276px] h-px w-[22px] bg-[#2c66a8]" />
        <div className="ml-[22px] h-px w-[15px] bg-[#2ba9c4]" />
        <div className="mt-[4px] -ml-1.5 size-[5px] rounded-full bg-[#888]" />
        <span className="-mt-[9px] ml-[852px] text-[11.5px] leading-3">2025/05/22</span>
      </div>
      <TitleBar />
      <RibbonTabs />
      <div className="bg-[#d9d9d9]"><Ribbon /></div>
      <FileTabs />
      <main className="flex h-[1090px] bg-[#f5f5f5]">
        <Palette />
        <div className="pt-[9px]">
          <Canvas />
          <Console />
        </div>
      </main>
      <StatusBar />
      <div className="mt-2 ml-[1420px] h-[3px] w-[74px] rounded-t-md bg-[#fafafa]" />
    </div>
  );
}
